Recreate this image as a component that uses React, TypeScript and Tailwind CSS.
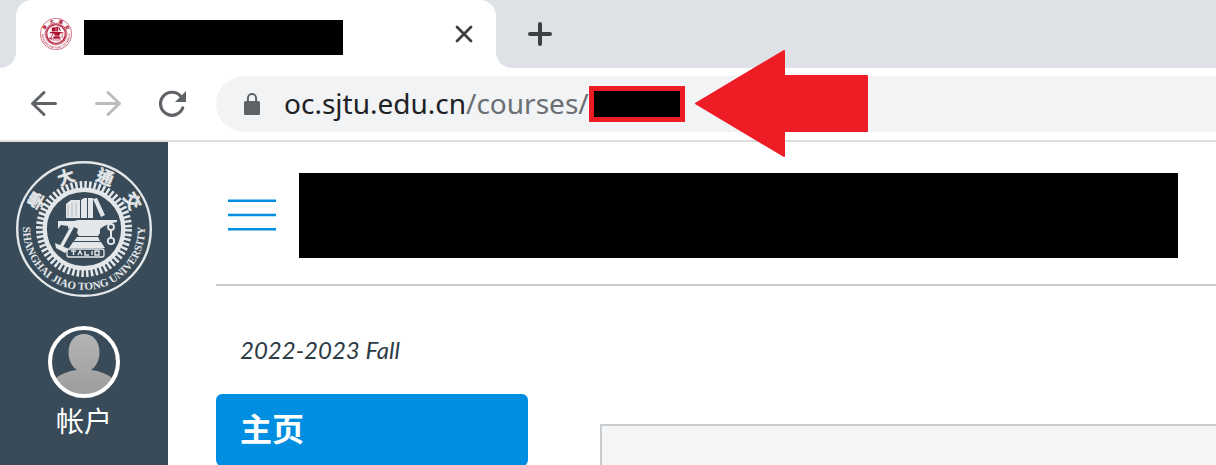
import React from "react";

const RED = "#ee1c25";

function Seal({ id, className }: { id: string; className: string }) {
  return (
    <svg viewBox="0 0 136 136" className={className} fill="none" stroke="currentColor" role="img" aria-label="Shanghai Jiao Tong University">
      <defs>
        <path id={id} d="M7 68 A61 61 0 0 0 129 68" />
      </defs>
      <circle cx="68" cy="68" r="66.800" strokeWidth="2.400" />
      <circle cx="68" cy="68" r="44" strokeWidth="8" strokeDasharray="2.500 2.108" />
      <circle cx="68" cy="68" r="39.300" strokeWidth="4.400" />
      <g fill="currentColor" stroke="currentColor" strokeWidth="0.500" fontFamily="'Noto Sans CJK TC', sans-serif" fontWeight="700" fontSize="17" textAnchor="middle">
        <text transform="translate(26 43) rotate(-60)">學</text>
        <text transform="translate(52 22) rotate(-19)">大</text>
        <text transform="translate(87 22) rotate(21)">通</text>
        <text transform="translate(111 43) rotate(60)">交</text>
      </g>
      <text fill="currentColor" stroke="none" fontFamily="'Liberation Serif', serif" fontWeight="700" fontSize="11" textAnchor="middle">
        <textPath href={`#${id}`} startOffset="50%">SHANGHAI JIAO TONG UNIVERSITY</textPath>
      </text>
      <g fill="currentColor" stroke="none">
        <path d="M50 43l5-4h9v18H50z" />
        <path d="M65 39l3-2h3v20h-6zM72 37h5v20h-5z" />
        <path d="M77 38l4-1 8 17-4 2z" />
        <path d="M42 60h16l4-1h39v2c-7 1-12 3-17 7v4l-2 3H63l-2-3 1-4-6-3-4 3v-3l-7-1-3 4z" />
        <path d="M61 76h21l2 4H58zM57 81h28l4 6H53z" />
        <path d="M39 82l14 6-4 4-9-5z" />
      </g>
      <path d="M59 61L45 86" strokeWidth="3.500" />
      <path d="M52 44v12M56 42v14M60 42v14" stroke="#00000033" strokeWidth="1" />
      <rect x="51" y="88" width="37" height="8" rx="2" strokeWidth="1.300" />
      <path d="M55 90h5M57.500 90v4M62 94l2-4 2 4M69 90v4h4M76 90v4M79 90h4v4h-4z" strokeWidth="1.400" />
      <circle cx="95" cy="66" r="3" strokeWidth="1.800" />
      <path d="M95 69v8" strokeWidth="2" />
      <circle cx="95" cy="80" r="3.200" strokeWidth="1.800" />
    </svg>
  );
}

function TabStrip() {
  return (
    <div className="flex h-[68px] shrink-0 bg-white">
      <div className="w-4 rounded-br-2xl bg-[#dee1e6]" />
      <div className="w-[480px] bg-[#dee1e6]">
        <div className="flex h-full items-center rounded-t-2xl bg-white pr-4 pl-6">
          <Seal id="favicon-arc" className="size-8 text-[#b01030]" />
          <div className="ml-3 mt-[6px] h-[35px] w-[259px] bg-black" />
          <button aria-label="Close tab" className="ml-auto grid size-8 place-items-center text-[#3c4043]">
            <svg viewBox="0 0 18 18" className="size-[18px]" stroke="currentColor" strokeWidth="2.800" strokeLinecap="round">
              <path d="M2 2l14 14M16 2L2 16" />
            </svg>
          </button>
        </div>
      </div>
      <div className="flex flex-1 items-center rounded-bl-2xl bg-[#dee1e6] pl-7">
        <button aria-label="New tab" className="grid size-8 place-items-center text-[#3c4043]">
          <svg viewBox="0 0 24 24" className="size-6" stroke="currentColor" strokeWidth="4" strokeLinecap="round">
            <path d="M12 2v20M2 12h20" />
          </svg>
        </button>
      </div>
    </div>
  );
}

function Toolbar() {
  return (
    <div className="flex h-[74px] shrink-0 items-center border-b-2 border-[#dcdddd] bg-white pl-7">
      <div className="flex w-[188px] gap-8 text-[#5f6368]">
        <button aria-label="Back" className="size-8">
          <svg viewBox="0 0 32 32" fill="none" stroke="currentColor" strokeWidth="3" strokeLinecap="round" strokeLinejoin="round">
            <path d="M27.500 15.500H4.500M16 4.500l-11.500 11 11.500 11" />
          </svg>
        </button>
        <button aria-label="Forward" className="size-8 text-[#babcbe]">
          <svg viewBox="0 0 32 32" fill="none" stroke="currentColor" strokeWidth="3" strokeLinecap="round" strokeLinejoin="round">
            <path d="M4.500 15.500h23M16 4.500l11.500 11-11.500 11" />
          </svg>
        </button>
        <button aria-label="Reload" className="size-8">
          <svg viewBox="0 0 32 32" fill="none" stroke="currentColor" strokeWidth="3.200" strokeLinecap="round">
            <path d="M26.700 20A11.500 11.500 0 1 1 24.500 8" />
            <path d="M30 3v11H19z" fill="currentColor" stroke="none" />
          </svg>
        </button>
      </div>
      <div className="flex h-14 flex-1 items-center rounded-l-full bg-[#f1f3f4] pl-7">
        <svg viewBox="0 0 16 22" className="h-[22px] w-4 text-[#5f6368]" fill="none">
          <rect y="8" width="16" height="14" rx="1.500" fill="currentColor" />
          <path d="M3.900 9V5.200a4.100 4.100 0 0 1 8.200 0V9" stroke="currentColor" strokeWidth="2" />
        </svg>
        <div
          role="textbox"
          aria-label="Address"
          tabIndex={0}
          className="ml-6 w-[305px] pb-0.5 whitespace-nowrap font-['Noto_Sans','Open_Sans',sans-serif] text-[28px] leading-9 text-[#202124]"
        >
          oc.sjtu.edu.cn<span className="text-[#6b6e72]">/courses/</span>
        </div>
        <div className="relative h-9 w-24 border-[5px] border-[#ee1c25] bg-black">
          <svg viewBox="0 0 173 107" className="absolute -top-[41px] left-[101px] z-10 h-[107px] w-[173px] max-w-none" fill={RED} stroke={RED} strokeWidth="2" strokeLinejoin="round">
            <path d="M1 53.500L89 1V26H172V81H89V106z" />
          </svg>
        </div>
      </div>
    </div>
  );
}

function Sidebar() {
  return (
    <nav className="flex w-[168px] shrink-0 flex-col items-center bg-[#394b58] pt-[19px] text-white">
      <a href="#home">
        <Seal id="sidebar-arc" className="size-[136px] text-[#e3e7e9]" />
      </a>
      <a href="#account" className="mt-[29px] flex flex-col items-center">
        <svg viewBox="0 0 72 72" className="size-[72px]">
          <defs>
            <clipPath id="avatar-clip">
              <circle cx="36" cy="36" r="33" />
            </clipPath>
            <linearGradient id="avatar-fill" x1="0" y1="8" x2="0" y2="68" gradientUnits="userSpaceOnUse">
              <stop stopColor="#b4b4b4" />
              <stop offset="1" stopColor="#9d9d9d" />
            </linearGradient>
          </defs>
          <g clipPath="url(#avatar-clip)" fill="url(#avatar-fill)">
            <path d="M36 8c9 0 15.500 7 15.500 18.500C51.500 35 47.500 41 43 44c9 1 16 4 21 8 3 3 5 8 6 20H2c1-12 3-17 6-20 5-4 12-7 21-8-4.500-3-8.500-9-8.500-17.500C20.500 15 27 8 36 8z" />
          </g>
          <circle cx="36" cy="36" r="34" fill="none" stroke="white" strokeWidth="4" />
        </svg>
        <span className="mt-1 font-['Noto_Sans_CJK_SC',sans-serif] text-[28px] leading-9">帐户</span>
      </a>
    </nav>
  );
}

export default function App() {
  return (
    <div className="flex h-screen flex-col overflow-hidden bg-white">
      <TabStrip />
      <Toolbar />
      <div className="flex flex-1">
        <Sidebar />
        <main className="ml-12 flex-1">
          <header className="flex h-36 items-center border-b-2 border-[#c7cdd1] pt-1 pr-[38px] pl-3">
            <button aria-label="Menu" className="mr-[23px] text-[#008ee2]">
              <svg viewBox="0 0 48 32" className="h-8 w-12" stroke="currentColor" strokeWidth="2.500">
                <path d="M0 1.700h48M0 16h48M0 30.300h48" />
              </svg>
            </button>
            <div className="h-[85px] flex-1 bg-black" />
          </header>
          <div className="flex">
            <div className="w-[312px]">
              <p className="mt-12 pl-6 font-[Lato,sans-serif] text-2xl leading-8 text-[#2d3b45] italic">2022-2023 Fall</p>
              <a
                href="#course-home"
                className="mt-7 flex h-[72px] items-center rounded-md bg-[#008ee2] pb-1.5 pl-6 font-['Noto_Sans_CJK_SC',sans-serif] text-[32px] font-bold text-white"
              >
                主页
              </a>
            </div>
            <div className="mt-[138px] ml-[72px] h-24 flex-1 border-2 border-r-0 border-[#c7cdd1] bg-[#f5f5f5]" />
          </div>
        </main>
      </div>
    </div>
  );
}
